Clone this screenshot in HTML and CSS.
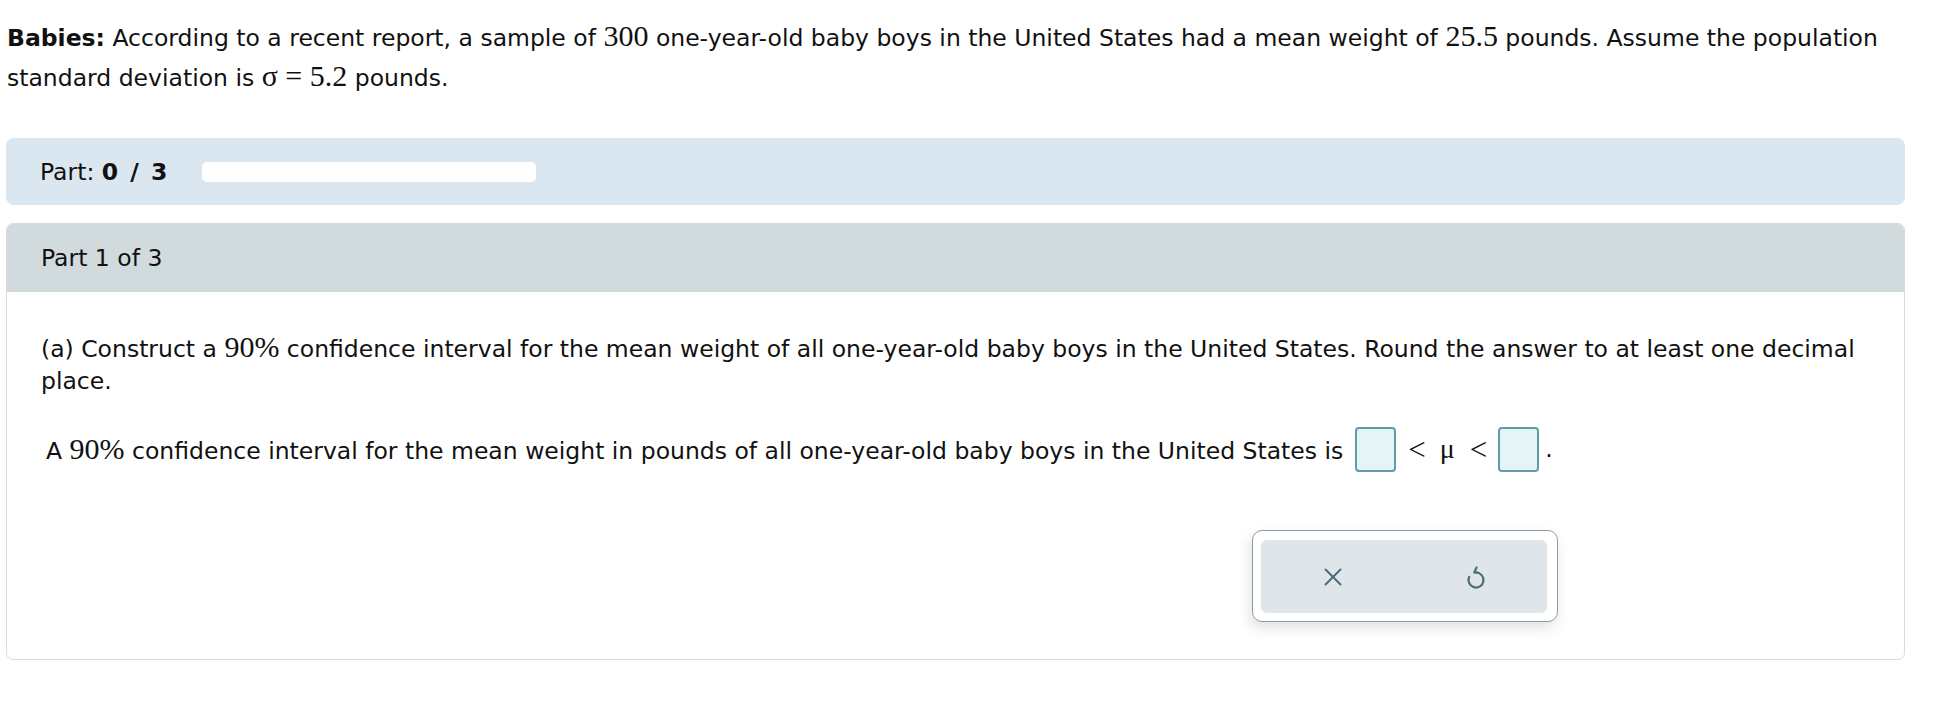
FILE: index.html
```html
<!DOCTYPE html>
<html>
<head>
<meta charset="utf-8">
<link rel="stylesheet" href="styles.css">
</head>
<body>
<div class="page">
  <p class="intro"><b>Babies:</b> According to a recent report, a sample of <span class="m">300</span> one-year-old baby boys in the United States had a mean weight of <span class="m">25.5</span> pounds. Assume the population standard deviation is <span class="m">σ&nbsp;=&nbsp;5.2</span> pounds.</p>

  <div class="progress">
    <span class="plabel">Part: <b>0 / 3</b></span>
    <div class="pbar"></div>
  </div>

  <div class="card">
    <div class="card-head">Part 1 of 3</div>
    <div class="card-body">
      <p class="question">(a) Construct a <span class="m">90%</span> confidence interval for the mean weight of all one-year-old baby boys in the United States. Round the answer to at least one decimal place.</p>
      <div class="answer">
        <span>A <span class="m">90%</span> confidence interval for the mean weight in pounds of all one-year-old baby boys in the United States is</span>
        <span class="box"></span>
        <span class="rel lt1">&lt;</span>
        <span class="rel mu">μ</span>
        <span class="rel lt2">&lt;</span>
        <span class="box box2"></span>
        <span class="dot">.</span>
      </div>
      <div class="panel">
        <div class="panel-inner">
          <div class="btn">
            <svg width="24" height="24" viewBox="0 0 24 24" fill="none" stroke="#4a6e79" stroke-width="2" stroke-linecap="round"><path d="M4.5 4.5 L19.5 19.5 M19.5 4.5 L4.5 19.5"/></svg>
          </div>
          <div class="btn">
            <svg width="24" height="26" viewBox="0 0 24 26" fill="none" stroke="#4a6e79" stroke-width="2.2" stroke-linecap="round" stroke-linejoin="round"><path d="M12 8.5 A7.5 7.5 0 1 1 5.2 12.8"/><path d="M14 8.5 H10.2 L12.6 3.4"/></svg>
          </div>
        </div>
      </div>
    </div>
  </div>
</div>
</body>
</html>
```

FILE: styles.css
```css
html, body {
  margin: 0;
  padding: 0;
  background: #ffffff;
}
body {
  font-family: "DejaVu Sans", Verdana, sans-serif;
  font-size: 23.5px;
  color: #111;
}
.page {
  width: 1899px;
  padding-left: 6px;
}
.m {
  font-family: "Liberation Serif", "Times New Roman", serif;
  font-size: 30px;
  line-height: 1;
}
.intro {
  margin: 18px 0 0 1px;
  line-height: 40px;
}
.progress {
  margin-top: 40px;
  height: 67px;
  background: #dae6f0;
  border-radius: 8px;
  display: flex;
  align-items: center;
  padding-left: 34px;
  box-sizing: border-box;
}
.plabel {
  width: 162px;
}
.plabel b {
  word-spacing: 4px;
}
.pbar {
  width: 334px;
  height: 20px;
  background: #ffffff;
  border-radius: 5px;
}
.card {
  margin-top: 18px;
  border: 1px solid #d9dcde;
  border-radius: 7px;
  overflow: hidden;
}
.card-head {
  height: 68px;
  background: #d1dadd;
  display: flex;
  align-items: center;
  padding-left: 34px;
}
.card-body {
  padding: 40px 34px 37px 34px;
}
.question {
  margin: 0;
  line-height: 32px;
}
.answer {
  margin-top: 29px;
  padding-left: 5px;
  display: flex;
  align-items: center;
  height: 46px;
}
.box {
  width: 37px;
  height: 41px;
  border: 2px solid #5f9ea9;
  background: #e6f4f8;
  border-radius: 4px;
  margin-left: 12px;
}
.rel {
  font-family: "Liberation Serif", "Times New Roman", serif;
  font-size: 31px;
  line-height: 1;
}
.lt1 {
  margin-left: 12px;
}
.mu {
  margin-left: 14px;
  font-size: 28px;
}
.lt2 {
  margin-left: 15px;
}
.box2 {
  margin-left: 11px;
}
.dot {
  margin-left: 6px;
}
.panel {
  margin-top: 58px;
  margin-left: 1211px;
  width: 306px;
  height: 92px;
  box-sizing: border-box;
  border: 1px solid #8c9da4;
  border-radius: 10px;
  background: #ffffff;
  padding: 9px 10px 8px 8px;
  box-shadow: -2px 6px 14px rgba(0, 0, 0, 0.12);
}
.panel-inner {
  height: 100%;
  background: #dfe5e8;
  border-radius: 6px;
  display: flex;
}
.btn {
  flex: 1;
  display: flex;
  align-items: center;
  justify-content: center;
}
```
